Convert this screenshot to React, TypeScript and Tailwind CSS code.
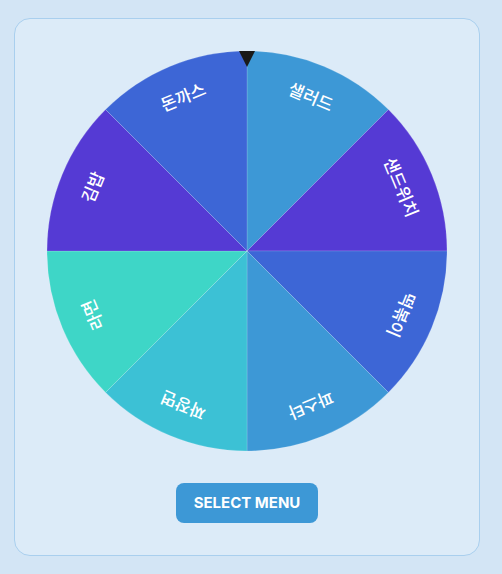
const menus = [
  { name: "샐러드", color: "#3d98d6" },
  { name: "샌드위치", color: "#553ad4" },
  { name: "떡볶이", color: "#3d66d6" },
  { name: "파스타", color: "#3d98d6" },
  { name: "짜장면", color: "#3cc1d5" },
  { name: "라면", color: "#3ed6c7" },
  { name: "김밥", color: "#553ad4" },
  { name: "돈까스", color: "#3d66d6" },
];

const R = 200;

function point(deg: number) {
  const rad = ((deg - 90) * Math.PI) / 180;
  return `${(R * Math.cos(rad)).toFixed(3)} ${(R * Math.sin(rad)).toFixed(3)}`;
}

function Wheel() {
  const step = 360 / menus.length;
  return (
    <div className="relative h-[400px] w-[400px]">
      <svg width="400" height="400" viewBox="-200 -200 400 400">
        {menus.map((m, i) => {
          const start = i * step;
          const end = start + step;
          return (
            <path
              key={m.name}
              d={`M 0 0 L ${point(start)} A ${R} ${R} 0 0 1 ${point(end)} Z`}
              fill={m.color}
              stroke="rgba(255,255,255,0.25)"
              strokeWidth="0.6"
            />
          );
        })}
        {menus.map((m, i) => {
          const mid = i * step + step / 2;
          return (
            <text
              key={m.name + "-label"}
              transform={`rotate(${mid}) translate(0 -165)`}
              textAnchor="middle"
              dominantBaseline="middle"
              fill="#ffffff"
              fontSize="17"
              fontWeight="500"
              style={{ fontFamily: '"Noto Sans CJK KR", "Noto Sans", sans-serif' }}
            >
              {m.name}
            </text>
          );
        })}
      </svg>
      <div className="absolute left-1/2 top-0 h-0 w-0 -translate-x-1/2 border-x-[8px] border-t-[16px] border-x-transparent border-t-[#1a1a1a]" />
    </div>
  );
}

export default function App() {
  return (
    <div className="min-h-[574px] w-full bg-[#d3e5f5] pt-[18px]">
      <div className="ml-[14px] flex w-[466px] flex-col items-center rounded-2xl border border-[#a9cfee] bg-[#dcebf8] pb-[32px] pt-[32px]">
        <Wheel />
        <button className="mt-[32px] h-[40px] w-[142px] rounded-lg bg-[#3d98d6] font-['Inter'] text-[15px] font-bold text-white">
          SELECT MENU
        </button>
      </div>
    </div>
  );
}
